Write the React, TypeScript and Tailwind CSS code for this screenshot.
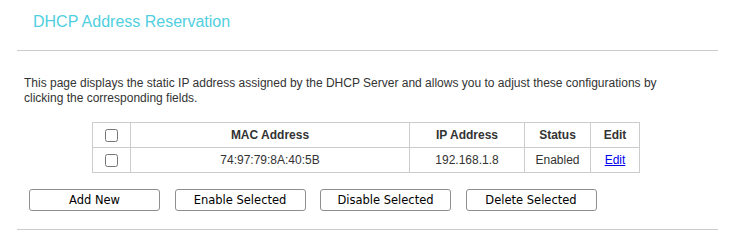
// DHCP address reservation panel: title, description, reservation table, action buttons.
import { useState } from "react";

type Reservation = {
  mac: string;
  ip: string;
  status: string;
};

const RESERVATIONS: Reservation[] = [
  { mac: "74:97:79:8A:40:5B", ip: "192.168.1.8", status: "Enabled" },
];

const ACTIONS = ["Add New", "Enable Selected", "Disable Selected", "Delete Selected"];

export default function App() {
  const [checked, setChecked] = useState<boolean[]>(RESERVATIONS.map(() => false));
  const allChecked = checked.length > 0 && checked.every(Boolean);

  return (
    <div className="w-[738px] h-[246px] bg-white font-['Liberation_Sans',Arial,sans-serif] text-[12px] text-[#333]">
      <div className="pl-[33px] pt-[12px] h-[50px]">
        <h1 className="text-[16px] leading-[20px] text-[#4fcfe0] font-normal">
          DHCP Address Reservation
        </h1>
      </div>
      <div className="mx-[17px] w-[701px] border-t border-[#cccccc]" />

      <p className="pl-[24px] pr-[60px] pt-[25px] leading-[15px] text-[#333]">
        This page displays the static IP address assigned by the DHCP Server and allows you to adjust these configurations by
        clicking the corresponding fields.
      </p>

      <table className="ml-[92px] mt-[16px] w-[548px] border-collapse border border-[#cccccc] text-center">
        <thead>
          <tr className="h-[25px]">
            <th className="w-[38px] border border-[#cccccc] p-0">
              <input
                type="checkbox"
                checked={allChecked}
                onChange={() => setChecked(checked.map(() => !allChecked))}
                className="align-middle m-0 w-[13px] h-[13px]"
              />
            </th>
            <th className="w-[279px] border border-[#cccccc] font-bold">MAC Address</th>
            <th className="w-[115px] border border-[#cccccc] font-bold">IP Address</th>
            <th className="w-[66px] border border-[#cccccc] font-bold">Status</th>
            <th className="border border-[#cccccc] font-bold">Edit</th>
          </tr>
        </thead>
        <tbody>
          {RESERVATIONS.map((r, i) => (
            <tr key={r.mac} className="h-[25px]">
              <td className="border border-[#cccccc] p-0">
                <input
                  type="checkbox"
                  checked={checked[i]}
                  onChange={() => setChecked(checked.map((c, j) => (j === i ? !c : c)))}
                  className="align-middle m-0 w-[13px] h-[13px]"
                />
              </td>
              <td className="border border-[#cccccc]">{r.mac}</td>
              <td className="border border-[#cccccc]">{r.ip}</td>
              <td className="border border-[#cccccc]">{r.status}</td>
              <td className="border border-[#cccccc]">
                <a href="#" className="text-[#0000ee] underline">
                  Edit
                </a>
              </td>
            </tr>
          ))}
        </tbody>
      </table>

      <div className="flex gap-[14.5px] pl-[29px] pt-[16px]">
        {ACTIONS.map((label) => (
          <button
            key={label}
            type="button"
            className="w-[131px] h-[22px] rounded-[3px] border border-[#8f8f8f] bg-white text-[#000] font-['DejaVu_Sans',Tahoma,sans-serif] text-[11.5px] leading-[20px]"
          >
            {label}
          </button>
        ))}
      </div>

      <div className="mx-[17px] mt-[18px] w-[701px] border-t border-[#cccccc]" />
    </div>
  );
}
